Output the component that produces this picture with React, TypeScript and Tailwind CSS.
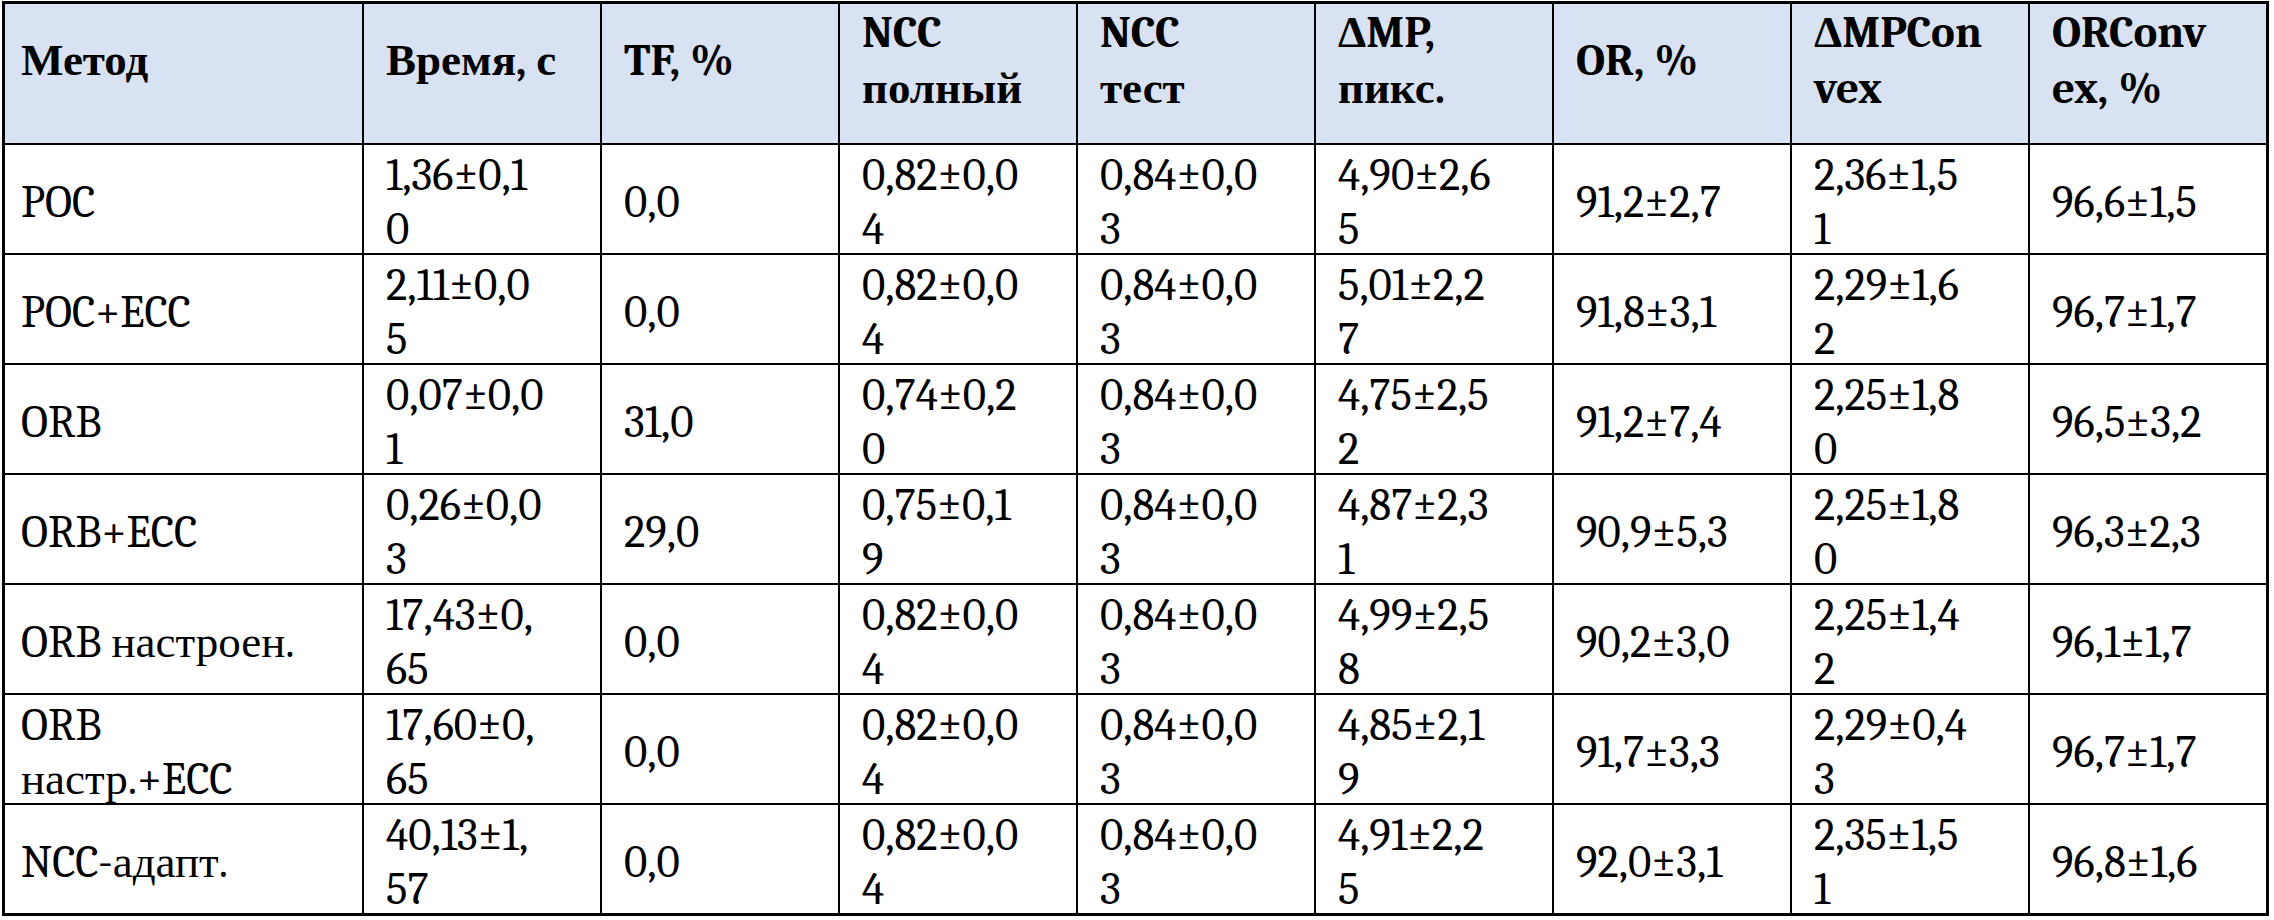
import React from "react";

const header: React.ReactNode[] = [
  "Метод",
  "Время, с",
  "TF, %",
  <>NCC<br />полный</>,
  <>NCC<br />тест</>,
  <>ΔMP,<br />пикс.</>,
  "OR, %",
  <>ΔMPCon<br />vex</>,
  <>ORConv<br />ex, %</>,
];

const rows: string[][] = [
  ["POC", "1,36±0,1|0", "0,0", "0,82±0,0|4", "0,84±0,0|3", "4,90±2,6|5", "91,2±2,7", "2,36±1,5|1", "96,6±1,5"],
  ["POC+ECC", "2,11±0,0|5", "0,0", "0,82±0,0|4", "0,84±0,0|3", "5,01±2,2|7", "91,8±3,1", "2,29±1,6|2", "96,7±1,7"],
  ["ORB", "0,07±0,0|1", "31,0", "0,74±0,2|0", "0,84±0,0|3", "4,75±2,5|2", "91,2±7,4", "2,25±1,8|0", "96,5±3,2"],
  ["ORB+ECC", "0,26±0,0|3", "29,0", "0,75±0,1|9", "0,84±0,0|3", "4,87±2,3|1", "90,9±5,3", "2,25±1,8|0", "96,3±2,3"],
  ["ORB настроен.", "17,43±0,|65", "0,0", "0,82±0,0|4", "0,84±0,0|3", "4,99±2,5|8", "90,2±3,0", "2,25±1,4|2", "96,1±1,7"],
  ["ORB|настр.+ECC", "17,60±0,|65", "0,0", "0,82±0,0|4", "0,84±0,0|3", "4,85±2,1|9", "91,7±3,3", "2,29±0,4|3", "96,7±1,7"],
  ["NCC-адапт.", "40,13±1,|57", "0,0", "0,82±0,0|4", "0,84±0,0|3", "4,91±2,2|5", "92,0±3,1", "2,35±1,5|1", "96,8±1,6"],
];

function Lines({ text }: { text: string }) {
  const parts = text.split("|");
  return (
    <div>
      {parts.map((p, i) => (
        <React.Fragment key={i}>
          {i > 0 && <br />}
          {p}
        </React.Fragment>
      ))}
    </div>
  );
}

export default function App() {
  return (
    <div className="min-h-[920px] w-full bg-white pl-[2px] pt-[1px] font-serif text-black">
      <div className="grid w-fit grid-cols-[357px_repeat(8,236px)] grid-rows-[139px_repeat(7,108px)] gap-[2px] bg-black p-[3px] text-[45px]">
        {header.map((h, i) => (
          <div
            key={`h${i}`}
            className={`flex flex-col justify-center bg-[#d9e2f3] pb-[27px] font-bold leading-[56px] ${
              i === 0 ? "pl-[16px]" : "pl-[22px]"
            }`}
          >
            <div>{h}</div>
          </div>
        ))}
        {rows.map((r, ri) =>
          r.map((c, ci) => (
            <div
              key={`r${ri}c${ci}`}
              className={`flex items-center overflow-visible bg-white pt-[6px] leading-[54px] whitespace-nowrap ${
                ci === 0 ? "pl-[16px]" : "pl-[22px]"
              }`}
            >
              <Lines text={c} />
            </div>
          ))
        )}
      </div>
    </div>
  );
}
